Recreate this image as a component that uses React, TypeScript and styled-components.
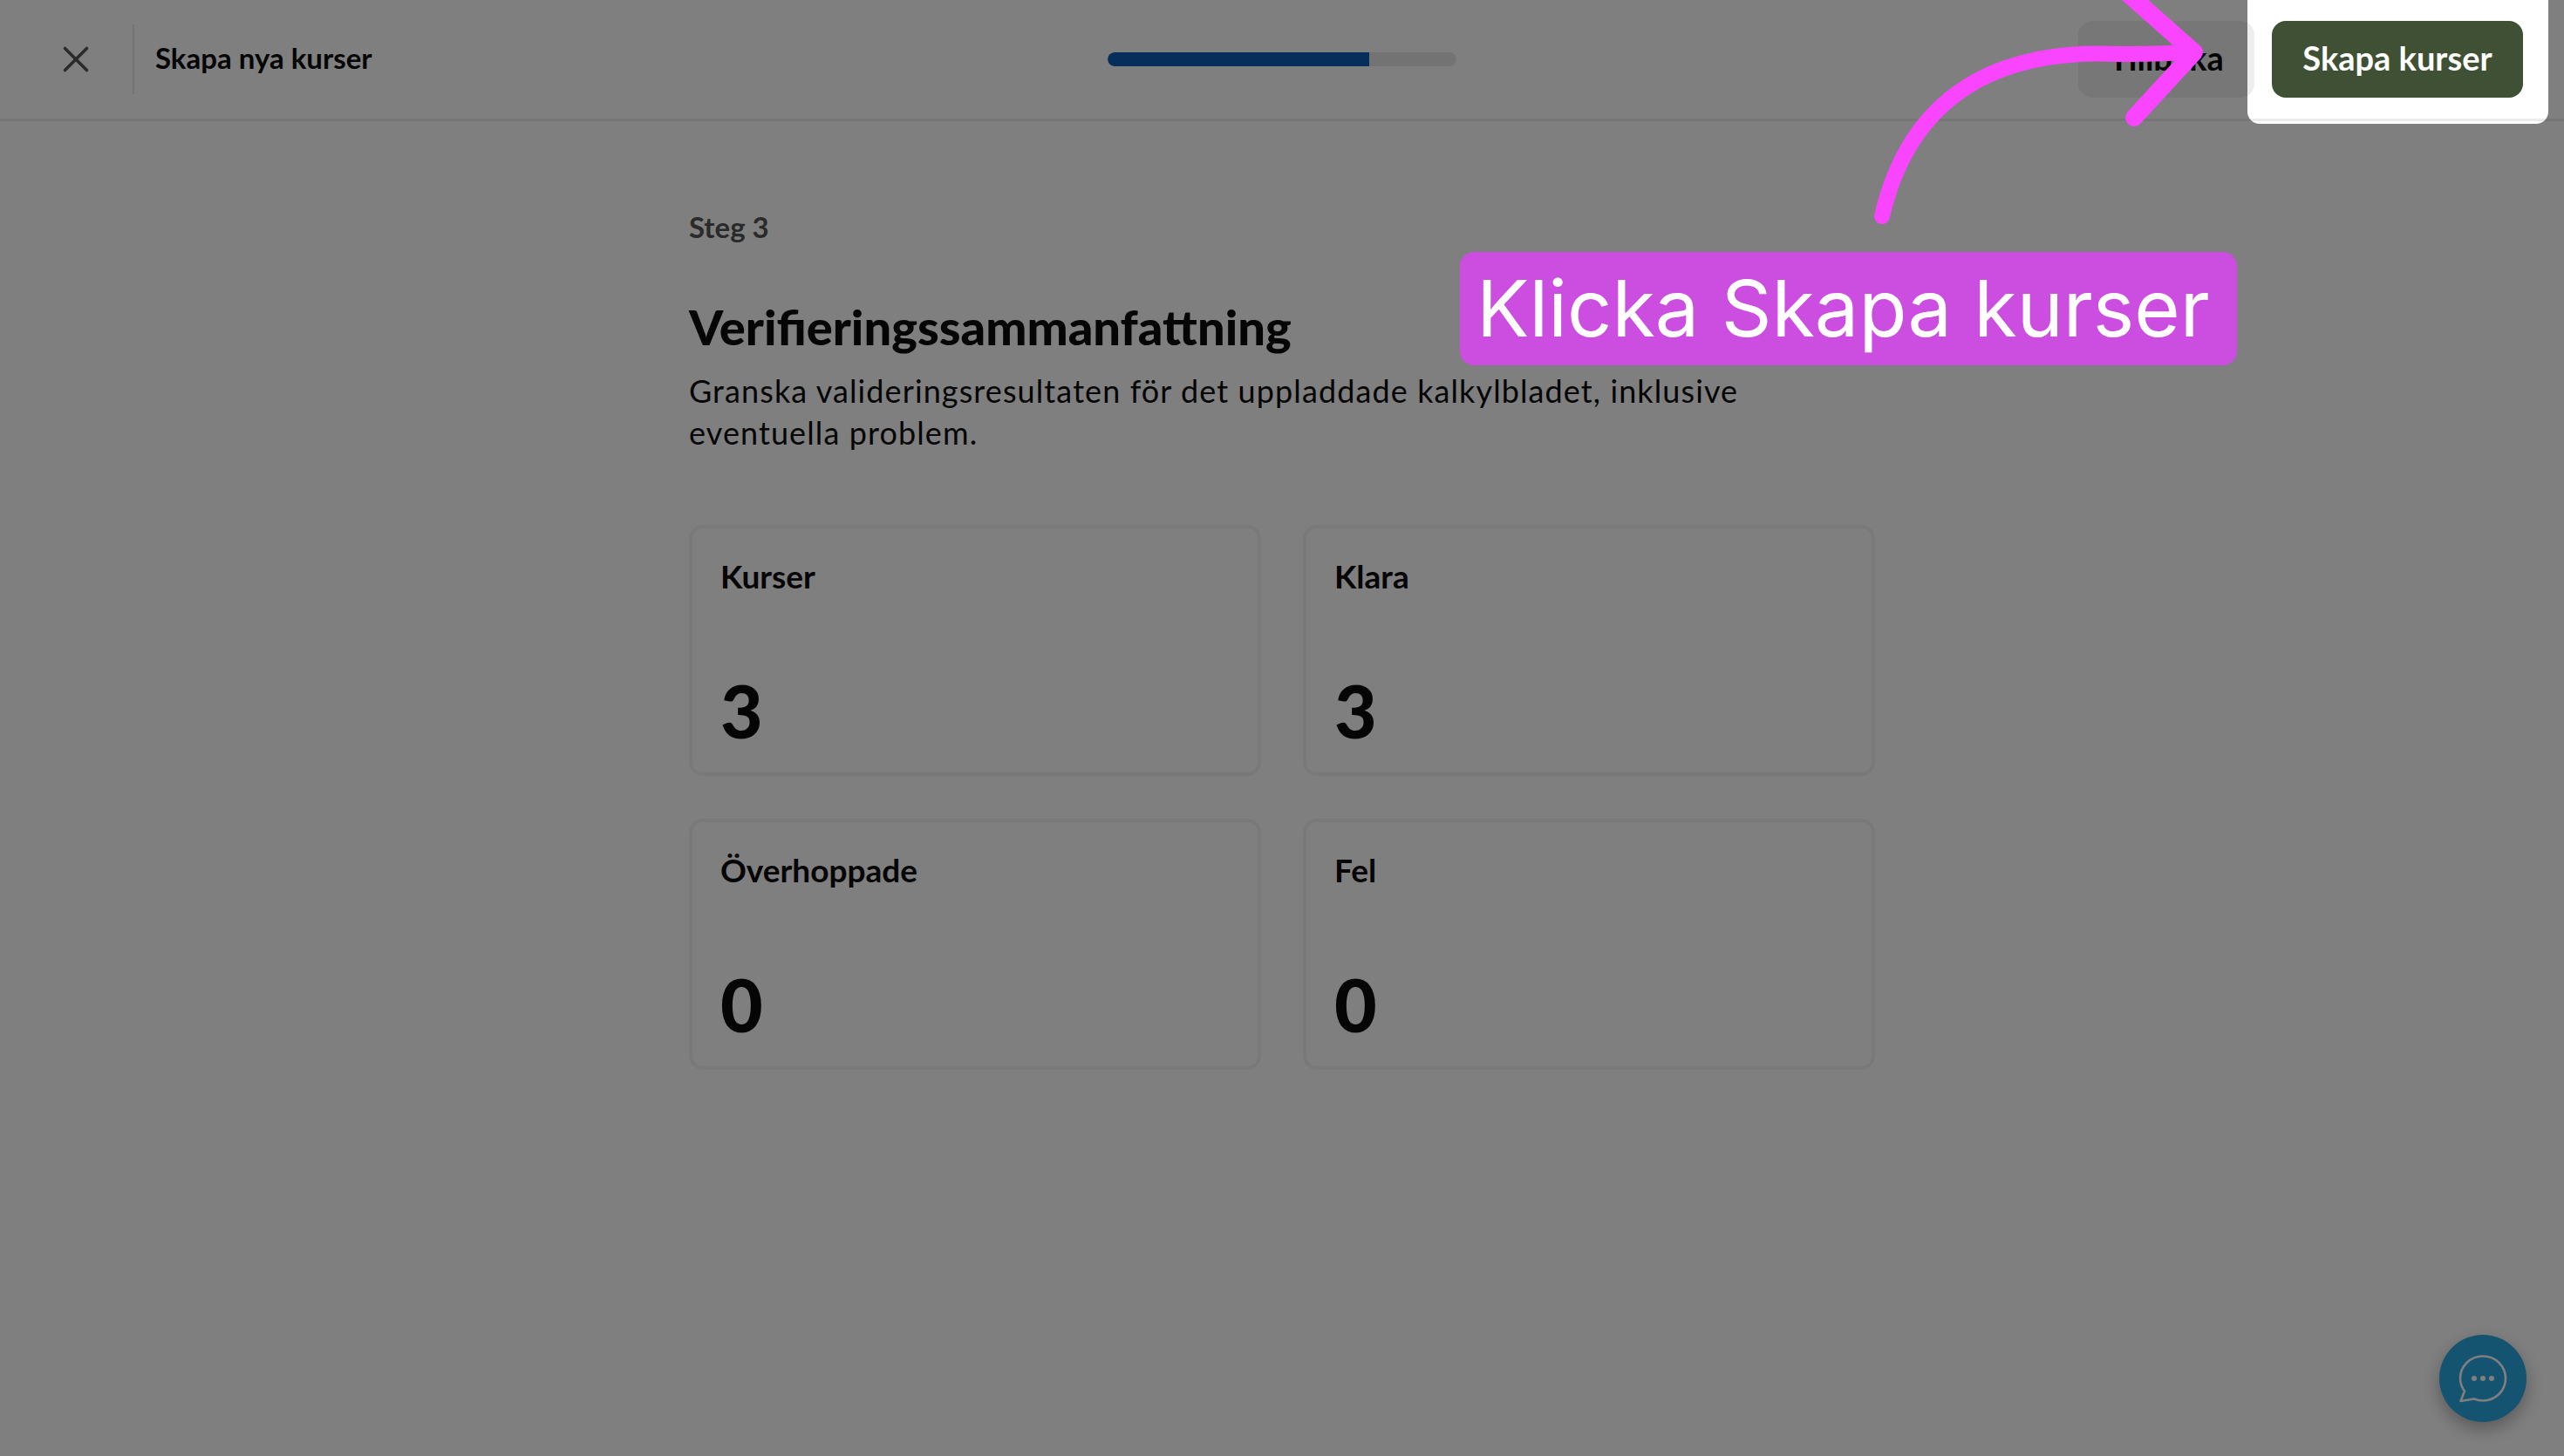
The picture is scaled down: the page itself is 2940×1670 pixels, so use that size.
import styled, { createGlobalStyle } from "styled-components";
import { X } from "lucide-react";

const GlobalStyle = createGlobalStyle`
  html, body {
    margin: 0;
    padding: 0;
    background: #ffffff;
  }
  body {
    font-family: "Lato", "Open Sans", sans-serif;
    color: #0a0a0a;
    overflow: hidden;
  }
`;

const Page = styled.div`
  position: relative;
  width: 2940px;
  height: 1670px;
  overflow: hidden;
  background: #ffffff;
`;

const Header = styled.header`
  display: flex;
  align-items: center;
  height: 136px;
  padding: 0 30px 0 0;
  border-bottom: 3px solid #ececec;
  position: relative;
`;

const CloseCell = styled.div`
  box-sizing: border-box;
  display: flex;
  align-items: center;
  justify-content: center;
  width: 154px;
  height: 80px;
  padding-left: 22px;
  border-right: 2px solid #e8e8e8;
  color: #555555;
`;

const Title = styled.div`
  margin: -4px 0 0 24px;
  font-size: 33px;
  font-weight: 700;
`;

const Progress = styled.div`
  position: absolute;
  left: 1270px;
  top: 60px;
  width: 400px;
  height: 16px;
  border-radius: 8px;
  background: #e6e6e6;
  overflow: hidden;
`;

const ProgressFill = styled.div`
  height: 100%;
  background: #0e5ab4;
  border-radius: 8px 0 0 8px;
`;

const Actions = styled.div`
  margin-left: auto;
  display: flex;
  gap: 20px;
  padding-right: 17px;
`;

const Button = styled.button<{ $primary?: boolean }>`
  height: 88px;
  border: 0;
  border-radius: 16px;
  padding: 0 0 4px;
  font-family: inherit;
  font-size: 38px;
  font-weight: 700;
  background: ${(p) => (p.$primary ? "#3f5035" : "#eeeeee")};
  color: ${(p) => (p.$primary ? "#ffffff" : "#0a0a0a")};
  width: ${(p) => (p.$primary ? "288px" : "202px")};
`;

const Main = styled.main`
  width: 1360px;
  margin-left: 790px;
  padding-top: 99px;
`;

const StepLabel = styled.div`
  font-size: 33px;
  font-weight: 700;
  color: #555555;
  line-height: 44px;
`;

const Heading = styled.h1`
  margin: 60px 0 0;
  font-size: 56px;
  font-weight: 900;
  line-height: 66px;
`;

const Lead = styled.p`
  margin: 16px 0 0;
  width: 1240px;
  font-size: 36px;
  line-height: 48px;
  letter-spacing: 1.1px;
`;

const CardGrid = styled.div`
  display: grid;
  grid-template-columns: 656px 656px;
  gap: 49px 48px;
  margin-top: 82px;
`;

const Card = styled.div`
  box-sizing: border-box;
  height: 288px;
  padding: 35px 32px 36px;
  border: 4px solid #f2f2f2;
  border-radius: 16px;
  display: flex;
  flex-direction: column;
  justify-content: space-between;
`;

const CardLabel = styled.div`
  font-size: 37px;
  font-weight: 700;
  line-height: 40px;
`;

const CardValue = styled.div`
  font-size: 84px;
  font-weight: 900;
  line-height: 70px;
`;

const ChatButton = styled.div`
  position: absolute;
  left: 2797px;
  top: 1531px;
  width: 100px;
  height: 100px;
  border-radius: 50%;
  background: #2aa8e0;
  display: flex;
  align-items: center;
  justify-content: center;
  box-shadow: 0 8px 20px rgba(0, 0, 0, 0.3);
`;

const Spotlight = styled.div`
  position: absolute;
  left: 2577px;
  top: -20px;
  width: 345px;
  height: 162px;
  border-radius: 14px;
  box-shadow: 0 0 0 4000px rgba(0, 0, 0, 0.5);
`;

const Arrow = styled.svg`
  position: absolute;
  left: 2120px;
  top: 0;
  overflow: visible;
`;

const Callout = styled.div`
  position: absolute;
  left: 1674px;
  top: 289px;
  box-sizing: border-box;
  width: 891px;
  height: 130px;
  padding-left: 19px;
  border-radius: 16px;
  background: #cb4ee0;
  color: #ffffff;
  font-family: "Inter", sans-serif;
  font-size: 90px;
  line-height: 130px;
  white-space: nowrap;
`;

const stats = [
  { label: "Kurser", value: 3 },
  { label: "Klara", value: 3 },
  { label: "Överhoppade", value: 0 },
  { label: "Fel", value: 0 },
];

export default function App() {
  return (
    <Page>
      <GlobalStyle />
      <Header>
        <CloseCell>
          <X size={50} strokeWidth={1.7} />
        </CloseCell>
        <Title>Skapa nya kurser</Title>
        <Progress>
          <ProgressFill style={{ width: "75%" }} />
        </Progress>
        <Actions>
          <Button>Tillbaka</Button>
          <Button $primary>Skapa kurser</Button>
        </Actions>
      </Header>
      <Main>
        <StepLabel>Steg 3</StepLabel>
        <Heading>Verifieringssammanfattning</Heading>
        <Lead>
          Granska valideringsresultaten för det uppladdade kalkylbladet, inklusive eventuella problem.
        </Lead>
        <CardGrid>
          {stats.map((s) => (
            <Card key={s.label}>
              <CardLabel>{s.label}</CardLabel>
              <CardValue>{s.value}</CardValue>
            </Card>
          ))}
        </CardGrid>
      </Main>
      <ChatButton>
        <svg width="56" height="56" viewBox="0 0 56 56" fill="none">
          <path
            d="M28 2.5c14.600 0 26 11.400 26 25.500S42.600 53.500 28 53.500c-3.600 0-7-.7-10.100-2L2.500 54l4.500-11.500C3.800 38.300 2 33.400 2 28 2 13.900 13.400 2.500 28 2.500z"
            stroke="#fff"
            strokeWidth="2.6"
            strokeLinejoin="round"
          />
          <circle cx="18" cy="28" r="3" fill="#fff" />
          <circle cx="28" cy="28" r="3" fill="#fff" />
          <circle cx="38" cy="28" r="3" fill="#fff" />
        </svg>
      </ChatButton>
      <Spotlight />
      <Arrow width="420" height="260" viewBox="0 0 420 260" fill="none">
        <path
          d="M38 248C70 110 170 55 310 62C340 62 365 61 396 60"
          stroke="#f945ff"
          strokeWidth="18"
          strokeLinecap="round"
        />
        <path
          d="M300 -25L396 60L327 135"
          stroke="#f945ff"
          strokeWidth="20"
          strokeLinecap="round"
          strokeLinejoin="round"
        />
      </Arrow>
      <Callout>Klicka Skapa kurser</Callout>
    </Page>
  );
}
